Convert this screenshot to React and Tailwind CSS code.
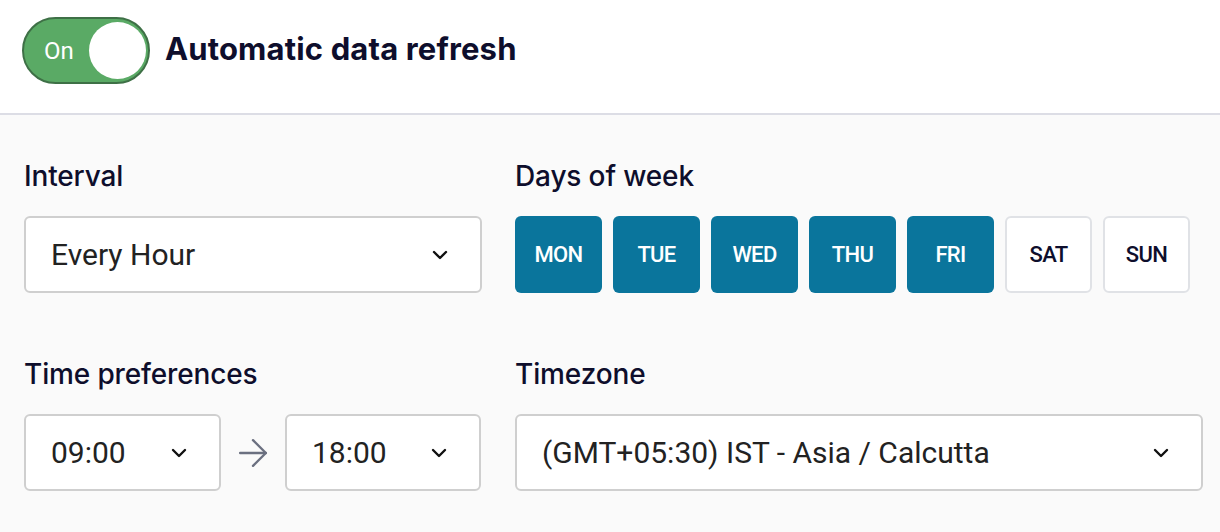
import { ChevronDown, ArrowRight } from "lucide-react";

const days = [
  { d: "MON", on: true },
  { d: "TUE", on: true },
  { d: "WED", on: true },
  { d: "THU", on: true },
  { d: "FRI", on: true },
  { d: "SAT", on: false },
  { d: "SUN", on: false },
];

function Select({ value, className = "" }) {
  return (
    <div
      className={
        "flex h-[77px] shrink-0 items-center justify-between rounded-md border-2 border-[#cfcfcf] bg-white pl-[25px] pr-[28px] " +
        className
      }
    >
      <span className="font-['Roboto',sans-serif] text-[30px] leading-none text-[#222]">{value}</span>
      <ChevronDown className="h-6 w-6 shrink-0 text-[#111]" strokeWidth={2.4} />
    </div>
  );
}

function Label({ children }) {
  return (
    <p className="mb-[21px] font-['Inter',sans-serif] text-[28px] font-medium leading-[38px] tracking-[-0.005em] text-[#0e0e2c]">
      {children}
    </p>
  );
}

export default function App() {
  return (
    <div className="h-[532px] w-[1220px] bg-[#fafafa]">
      <div className="flex h-[115px] items-start gap-[15px] border-b-2 border-[#dcdde5] bg-white pl-[22px] pt-[17px]">
        <div className="flex h-[67px] w-[128px] items-center justify-between rounded-full border-2 border-[#3e7046] bg-[#5aaa65] pl-[20px] pr-[2px]">
          <span className="font-['Roboto',sans-serif] text-[24px] text-white">On</span>
          <span className="h-[57px] w-[57px] rounded-full bg-white" />
        </div>
        <h1 className="mt-[11px] font-['Inter',sans-serif] text-[31px] font-bold leading-[42px] tracking-[0.005em] text-[#0e0e2c]">
          Automatic data refresh
        </h1>
      </div>

      <div className="grid grid-cols-[458px_688px] gap-x-[33px] gap-y-[62px] pl-[24px] pt-[42px]">
        <div>
          <Label>Interval</Label>
          <Select value="Every Hour" />
        </div>
        <div>
          <Label>Days of week</Label>
          <div className="flex gap-[11px]">
            {days.map((x) => (
              <div
                key={x.d}
                className={
                  "flex h-[77px] w-[87px] items-center justify-center rounded-md font-['Roboto',sans-serif] text-[22px] font-medium tracking-[-0.03em] " +
                  (x.on
                    ? "bg-[#0a759c] text-white"
                    : "border-2 border-[#e0e2e6] bg-white text-[#0e0e2c]")
                }
              >
                {x.d}
              </div>
            ))}
          </div>
        </div>
        <div>
          <Label>Time preferences</Label>
          <div className="flex items-center">
            <Select value="09:00" className="w-[197px]" />
            <ArrowRight className="mx-[10px] h-[44px] w-[44px] shrink-0 text-[#6b7080]" strokeWidth={1.3} />
            <Select value="18:00" className="w-[196px]" />
          </div>
        </div>
        <div>
          <Label>Timezone</Label>
          <Select value="(GMT+05:30) IST - Asia / Calcutta" className="pl-[22px] pr-[26px]" />
        </div>
      </div>
    </div>
  );
}
